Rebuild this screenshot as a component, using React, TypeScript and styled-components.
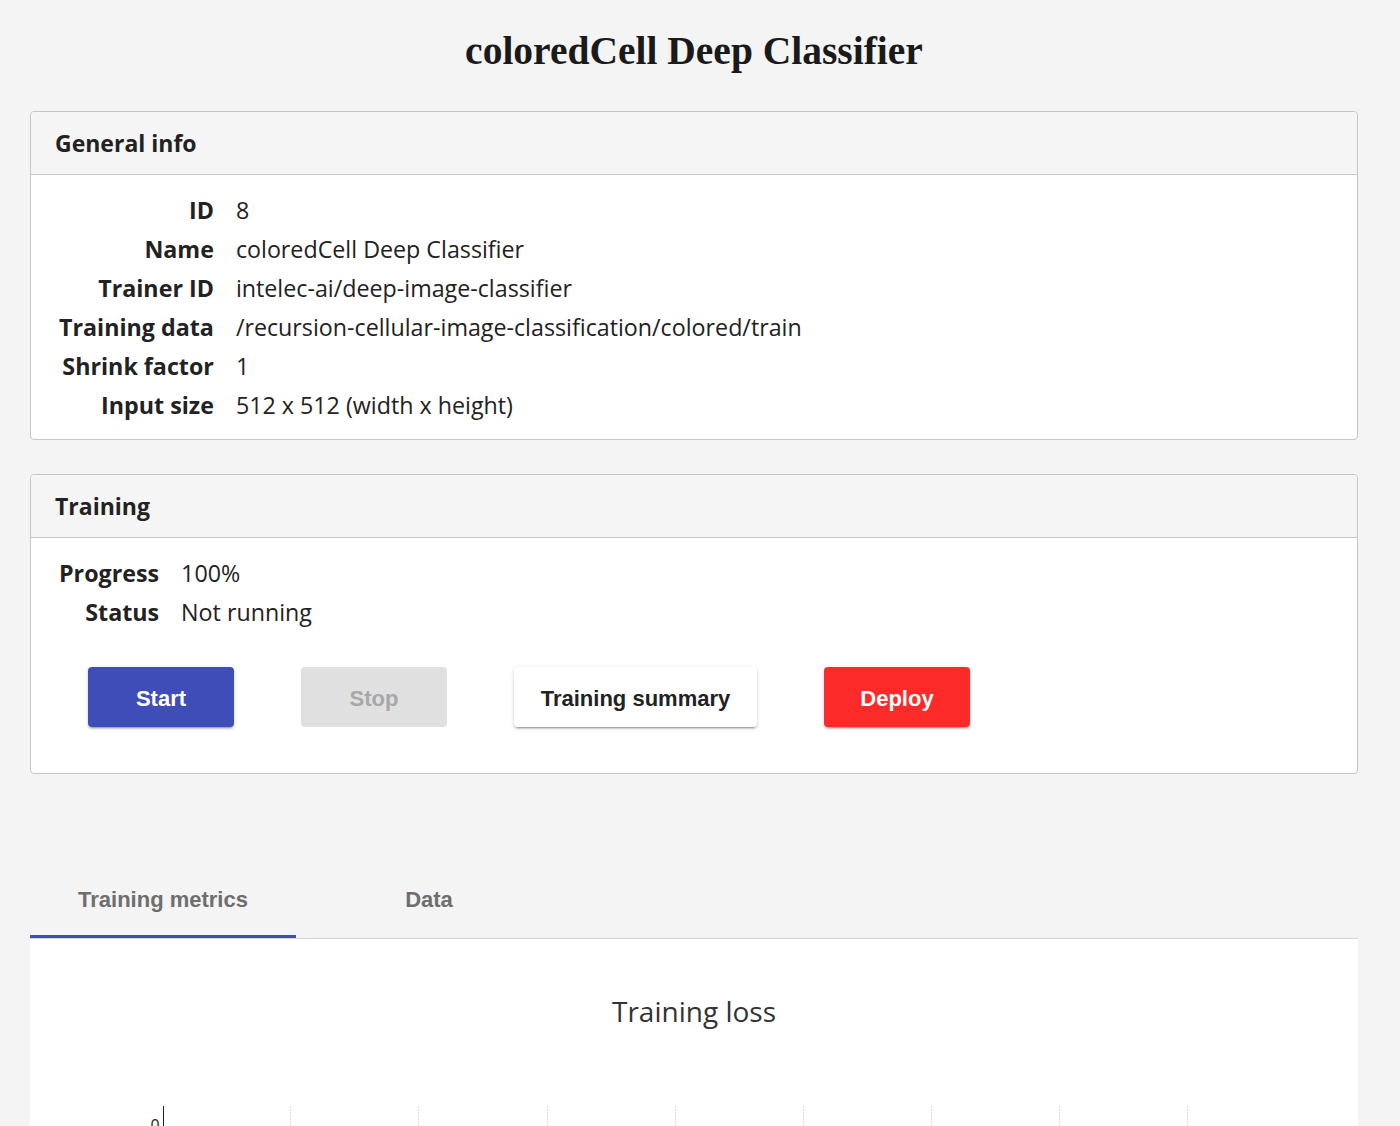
import React from "react";
import styled, { createGlobalStyle } from "styled-components";

const Global = createGlobalStyle`
  html, body { margin: 0; padding: 0; }
  body {
    background: #f4f4f4;
    font-family: "Open Sans", "Noto Sans", sans-serif;
    color: #222;
    overflow: hidden;
  }
`;

const Page = styled.div`
  width: 1328px;
  margin-left: 30px;
`;

const Title = styled.h1`
  font-family: "Liberation Serif", "Times New Roman", serif;
  font-weight: 700;
  font-size: 39.5px;
  line-height: 46px;
  text-align: center;
  margin: 28px 0 37px;
  color: #1a1a1a;
`;

const Panel = styled.section<{ $gap?: number }>`
  background: #fff;
  border: 1px solid #c6c6c6;
  border-radius: 4px;
  margin-bottom: ${(p) => p.$gap ?? 0}px;
`;

const PanelHeader = styled.div`
  height: 62px;
  display: flex;
  align-items: center;
  padding: 0 24px;
  background: #f5f5f5;
  border-bottom: 1px solid #c9c9c9;
  border-radius: 4px 4px 0 0;
  font-weight: 700;
  font-size: 23px;
  color: #222;
`;

const PanelBody = styled.div<{ $bottom: number }>`
  padding: 15px 24px ${(p) => p.$bottom}px 28px;
`;

const InfoGrid = styled.div`
  display: grid;
  grid-template-columns: max-content 1fr;
  column-gap: 22px;
  grid-auto-rows: 39px;
  align-items: center;
  font-size: 23.25px;
`;

const Label = styled.div`
  font-weight: 700;
  text-align: right;
  color: #222;
`;

const Value = styled.div`
  color: #222;
`;

const ButtonRow = styled.div`
  display: flex;
  gap: 67px;
  margin-top: 36px;
  padding-left: 29px;
`;

type Variant = "primary" | "disabled" | "default" | "danger";

const colors: Record<Variant, { bg: string; fg: string; shadow: boolean }> = {
  primary: { bg: "#3f4db8", fg: "#fff", shadow: true },
  disabled: { bg: "#e0e0e0", fg: "#a8a8a8", shadow: false },
  default: { bg: "#fff", fg: "#222", shadow: true },
  danger: { bg: "#fc2a28", fg: "#fff", shadow: true },
};

const Button = styled.button<{ $variant: Variant; $width: number }>`
  width: ${(p) => p.$width}px;
  height: 60px;
  padding: 4px 0 0;
  border: none;
  border-radius: 4px;
  font-family: "Liberation Sans", Arial, sans-serif;
  font-weight: 700;
  font-size: 22px;
  background: ${(p) => colors[p.$variant].bg};
  color: ${(p) => colors[p.$variant].fg};
  box-shadow: ${(p) =>
    colors[p.$variant].shadow
      ? "0 3px 1px -2px rgba(0,0,0,0.2), 0 2px 2px 0 rgba(0,0,0,0.14), 0 1px 5px 0 rgba(0,0,0,0.12)"
      : "none"};
  cursor: pointer;
`;

const Tabs = styled.div`
  display: flex;
  margin-top: 90px;
  border-bottom: 1px solid #d6d6d6;
`;

const Tab = styled.div<{ $active?: boolean }>`
  position: relative;
  width: 266px;
  height: 74px;
  display: flex;
  align-items: center;
  justify-content: center;
  padding-bottom: 3px;
  box-sizing: border-box;
  font-family: "Liberation Sans", Arial, sans-serif;
  font-weight: 700;
  font-size: 22px;
  color: #6e6e6e;
  &::after {
    content: "";
    position: absolute;
    left: 0;
    right: 0;
    bottom: 0;
    height: 3px;
    background: ${(p) => (p.$active ? "#3f4db8" : "transparent")};
  }
`;

const ChartCard = styled.div`
  background: #fff;
  height: 300px;
  display: flex;
  flex-direction: column;
  align-items: center;
`;

const ChartTitle = styled.div`
  margin-top: 53px;
  font-size: 28px;
  color: #333;
  line-height: 38px;
`;

const ChartSvg = styled.svg`
  display: block;
  margin-top: 76px;
  align-self: stretch;
`;

const info: [string, string][] = [
  ["ID", "8"],
  ["Name", "coloredCell Deep Classifier"],
  ["Trainer ID", "intelec-ai/deep-image-classifier"],
  ["Training data", "/recursion-cellular-image-classification/colored/train"],
  ["Shrink factor", "1"],
  ["Input size", "512 x 512 (width x height)"],
];

const training: [string, string][] = [
  ["Progress", "100%"],
  ["Status", "Not running"],
];

const gridXs = [260, 388, 517, 645, 773, 901, 1029, 1157];

export default function App() {
  return (
    <>
      <Global />
      <Page>
        <Title>coloredCell Deep Classifier</Title>

        <Panel $gap={34}>
          <PanelHeader>General info</PanelHeader>
          <PanelBody $bottom={15}>
            <InfoGrid>
              {info.map(([k, v]) => (
                <React.Fragment key={k}>
                  <Label>{k}</Label>
                  <Value>{v}</Value>
                </React.Fragment>
              ))}
            </InfoGrid>
          </PanelBody>
        </Panel>

        <Panel>
          <PanelHeader>Training</PanelHeader>
          <PanelBody $bottom={46}>
            <InfoGrid>
              {training.map(([k, v]) => (
                <React.Fragment key={k}>
                  <Label>{k}</Label>
                  <Value>{v}</Value>
                </React.Fragment>
              ))}
            </InfoGrid>
            <ButtonRow>
              <Button $variant="primary" $width={146}>Start</Button>
              <Button $variant="disabled" $width={146} disabled>Stop</Button>
              <Button $variant="default" $width={243}>Training summary</Button>
              <Button $variant="danger" $width={146}>Deploy</Button>
            </ButtonRow>
          </PanelBody>
        </Panel>

        <Tabs>
          <Tab $active>Training metrics</Tab>
          <Tab>Data</Tab>
        </Tabs>

        <ChartCard>
          <ChartTitle>Training loss</ChartTitle>
          <ChartSvg width="1328" height="120" viewBox="0 0 1328 120">
            {gridXs.map((x) => (
              <line key={x} x1={x + 0.5} y1={0} x2={x + 0.5} y2={120} stroke="#dcdcdc" strokeDasharray="2 1" />
            ))}
            <line x1={133} y1={20.5} x2={1194} y2={20.5} stroke="#ececec" />
            <line x1={133.5} y1={0} x2={133.5} y2={120} stroke="#222" />
            <text x={125} y={25} fontSize="16" textAnchor="middle" fill="#222" fontFamily="Open Sans, sans-serif">0</text>
          </ChartSvg>
        </ChartCard>
      </Page>
    </>
  );
}
